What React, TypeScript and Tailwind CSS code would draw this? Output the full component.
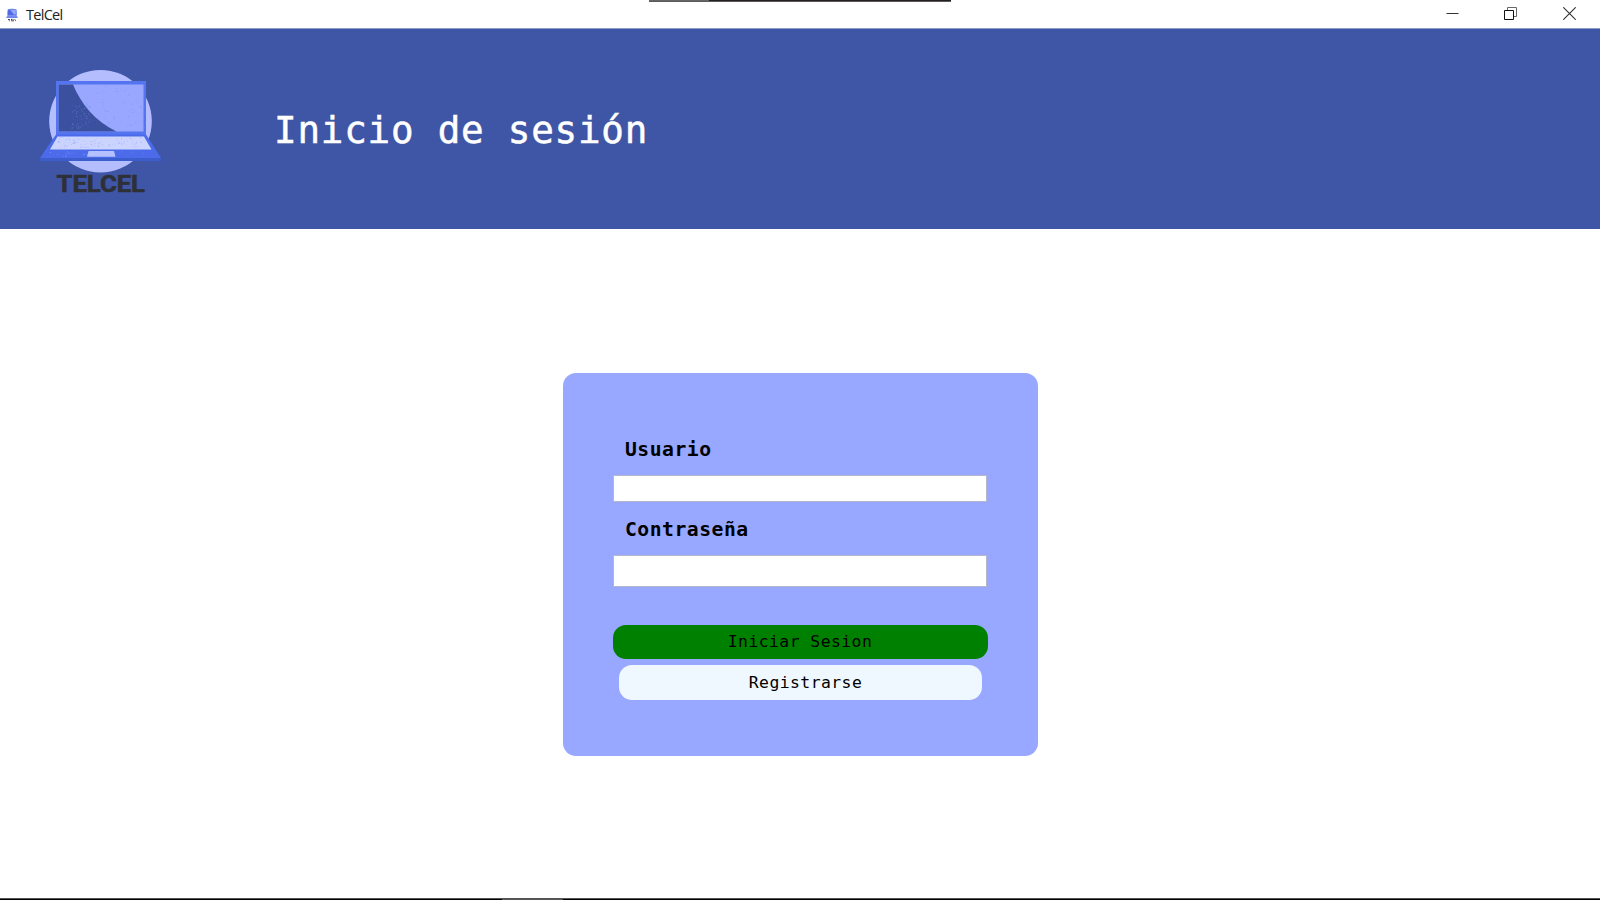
import React from "react";

type Speck = { x: number; y: number; r: number };

// Deterministic speckles for the printed texture of the laptop.
function specks(count: number, seed: number, x: number, y: number, w: number, h: number): Speck[] {
  let s = seed;
  const next = () => {
    s = (s * 16807) % 2147483647;
    return s / 2147483647;
  };
  return Array.from({ length: count }, () => ({
    x: x + next() * w,
    y: y + next() * h,
    r: 0.2 + next() * 0.35,
  }));
}

const screenSpecks = specks(60, 91, 42, 50, 20, 24);
const glareSpecks = specks(80, 417, 55, 31, 58, 42);
const keySpecks = specks(110, 733, 28, 82, 84, 11);
const baseSpecks = specks(34, 129, 20, 96.5, 102, 5);

function Specks({ items, fill }: { items: Speck[]; fill: string }) {
  return (
    <g fill={fill}>
      {items.map((d, i) => (
        <circle key={i} cx={d.x} cy={d.y} r={d.r} />
      ))}
    </g>
  );
}

function Logo({ className }: { className: string }) {
  return (
    <svg viewBox="0 0 150 150" className={className} role="img" aria-label="TELCEL">
      <circle cx="70.5" cy="66.2" r="51.3" fill="#b4beff" />
      <path d="M26 26h90v54H26z" fill="#5474f0" />
      <path d="M28.7 29.5h84.8v47H28.7z" fill="#99a7ff" />
      <path d="M28.7 29.5H43C51 49 65 66 86.5 76.5H28.7z" fill="#3b509f" />
      <Specks items={screenSpecks} fill="#657bd2" />
      <Specks items={glareSpecks} fill="#8090ed" />
      <path d="M26 79.5h90l15 23.5H10z" fill="#4b6bea" />
      <path d="M10 103h121v3H10z" fill="#3c5dcc" />
      <path d="M27.5 81.5h86.5l7.5 13H20z" fill="#cbd3ff" />
      <Specks items={keySpecks} fill="#9baaf8" />
      <Specks items={baseSpecks} fill="#8296fa" />
      <path d="M58.5 96h25.5l1.5 5.7H57z" fill="#b4c0ff" />
      <text
        x="26.5"
        y="137"
        fill="#2e3038"
        stroke="#2e3038"
        strokeWidth="0.6"
        fontFamily="Roboto, sans-serif"
        fontWeight="700"
        fontSize="24.5"
        textLength="88.5"
        lengthAdjust="spacingAndGlyphs"
      >
        TELCEL
      </text>
    </svg>
  );
}

function AppIcon() {
  return (
    <svg viewBox="0 0 12 14" className="h-[14px] w-[12px]" aria-hidden="true">
      <circle cx="6" cy="5.5" r="5" fill="#b4beff" />
      <path d="M1.7 1.3h8.8v6H1.7z" fill="#4f6de0" />
      <path d="M4.3 2h5.5v4.5H8z" fill="#99a7ff" />
      <path d="M1.7 7.3h8.8L12 10H0z" fill="#7388ee" />
      <path d="M2 11.5h2M5 11.5h1.5M7.5 11.5h1M9 12.3h1M2.8 12.8h1M5 12.8h3" stroke="#44464e" strokeWidth="1" />
    </svg>
  );
}

function TitleBar() {
  return (
    <div className="relative flex h-[29px] shrink-0 items-start justify-between border-b border-[#8d99c9] bg-white">
      <div className="absolute left-[649px] top-0 flex h-[2px] w-[302px] border-b border-[#5c5a5b] bg-[#231f20]">
        <div className="h-px w-[60px] bg-[#666]" />
      </div>
      <div className="flex h-7 items-center pl-1.5 pt-0.5">
        <AppIcon />
        <span className="ml-2 font-['Open_Sans',sans-serif] text-[14.5px] leading-7 tracking-[-0.7px] text-[#222]">
          TelCel
        </span>
      </div>
      <div className="flex pr-6 pt-[7px] text-[#333]">
        <svg viewBox="0 0 13 13" className="mr-[45px] size-[13px]" fill="none" stroke="currentColor">
          <path d="M0.5 6.5h12" />
        </svg>
        <svg viewBox="0 0 13 13" className="mr-[46px] size-[13px]" fill="none" stroke="currentColor">
          <path d="M3.5 3V0.5h9v9H10" stroke="#666" />
          <path d="M0.5 3.5h9v9h-9z" stroke="#111" />
        </svg>
        <svg viewBox="0 0 13 13" className="size-[13px]" fill="none" stroke="currentColor">
          <path d="M0.3 0.3l12.4 12.4M12.7 0.3L0.3 12.7" strokeWidth="1.1" />
        </svg>
      </div>
    </div>
  );
}

export default function App() {
  return (
    <div className="flex h-[900px] w-[1600px] flex-col overflow-hidden bg-white font-['DejaVu_Sans_Mono',monospace]">
      <TitleBar />
      <header className="flex h-[200px] shrink-0 items-start bg-[#3f56a6] pl-[30px] pt-[26px]">
        <Logo className="size-[150px] shrink-0" />
        <h1 className="ml-[94px] mt-[50px] text-[37.5px] leading-[50px] tracking-[0.8px] text-white [-webkit-text-stroke:0.5px_white]">
          Inicio de sesión
        </h1>
      </header>
      <main className="flex flex-1 flex-col items-center pt-[144px]">
        <form
          className="flex h-[383px] w-[475px] flex-col items-center rounded-[13px] bg-[#98a7ff] text-black"
          onSubmit={(e) => e.preventDefault()}
        >
          <label htmlFor="user" className="mt-[63px] w-[350px] text-[19.7px] font-bold leading-7 tracking-[0.52px]">
            Usuario
          </label>
          <input id="user" className="mt-[11px] h-[27px] w-[374px] border border-[#b4b7cc] bg-white px-2 outline-none" />
          <label htmlFor="pass" className="mt-[14px] w-[350px] text-[19.7px] font-bold leading-7 tracking-[0.52px]">
            Contraseña
          </label>
          <input
            id="pass"
            type="password"
            className="mt-[11px] h-8 w-[374px] border border-[#b4b7cc] bg-white px-2 outline-none"
          />
          <button className="mt-[37.5px] h-[34.5px] w-[375px] rounded-[13px] bg-[#008000] pt-[2px] text-[16.4px] tracking-[0.45px]">
            Iniciar Sesion
          </button>
          <button className="mt-1.5 h-[34.5px] w-[363px] rounded-[13px] bg-[#f0f8ff] pl-[11px] pt-[3px] text-[16.4px] tracking-[0.45px]">
            Registrarse
          </button>
        </form>
      </main>
      <div className="flex h-[2px] shrink-0 border-t border-[#555] bg-black pl-[502px]">
        <div className="h-px w-[61px] bg-[#555]" />
      </div>
    </div>
  );
}
